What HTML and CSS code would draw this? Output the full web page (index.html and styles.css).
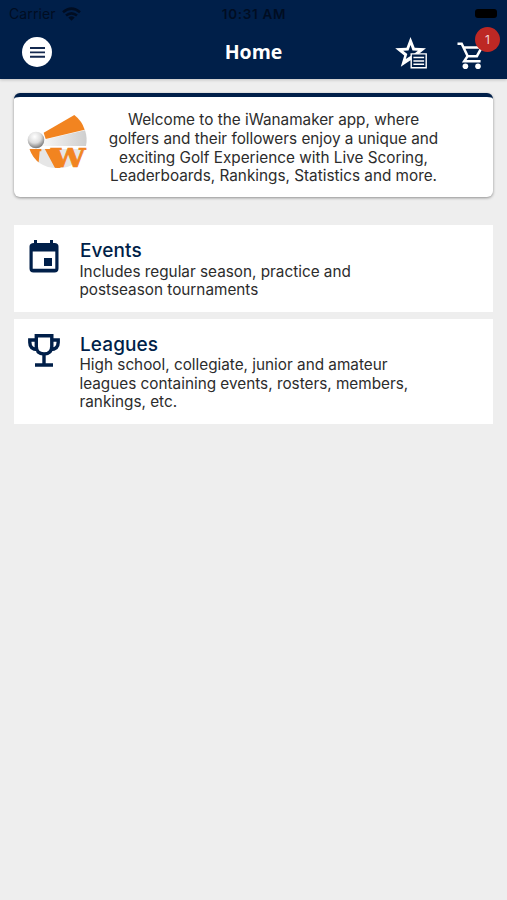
FILE: index.html
```html
<!DOCTYPE html>
<html lang="en">
<head>
<meta charset="utf-8">
<title>Home</title>
<link rel="stylesheet" href="styles.css">
</head>
<body>
<header class="header">
  <div class="status">
    <div class="carrier"><span>Carrier</span>
      <svg width="19" height="14" viewBox="0 0 19 14" fill="none" stroke="currentColor" stroke-width="2.6"><path d="M1 5.2Q9.5-2 18 5.2M4 8.6Q9.5 4 15 8.6"/><path d="M6.3 10.6Q9.5 8 12.7 10.6L9.5 13.8Z" fill="currentColor" stroke="none"/></svg>
    </div>
    <div class="time">10:31 AM</div>
    <div class="battery"></div>
  </div>
  <div class="toolbar">
    <button class="menu" aria-label="Menu"><svg width="15" height="11" viewBox="0 0 15 11" stroke="#14294f" stroke-width="1.9"><path d="M0 1h15M0 5.4h15M0 9.8h15"/></svg></button>
    <h1 class="title">Home</h1>
    <div class="actions">
      <svg class="favorites" width="33" height="33" viewBox="0 0 33 33" fill="none">
        <path fill="#fff" fill-rule="evenodd" d="M15.500 0l4.200 10.700 11.300.5-8.800 7 3.200 11.500-9.900-6.400-9.700 6.500 3.400-11.400L.2 11.200l11.300-.5ZM15.500 8l-2 5.600-5.300.2 4.100 3.300-1.500 5 4.700-3.200 4.800 3.200-1.500-5 4.100-3.300-5.400-.2Z"/>
        <path fill="#001f49" stroke="#fff" stroke-width="1.4" d="M16.200 16.900h15v13.800h-15z"/>
        <path stroke="#fff" stroke-width="1.500" d="M18.400 20.500h10.700M18.400 23.900h10.700M18.400 27.300h10.700"/>
      </svg>
      <div class="cart">
        <svg width="27" height="28" viewBox="0 0 27 28" fill="none" stroke="#fff" stroke-width="2.500"><path d="M.5 1.800h4.200l6 12.400h9.200l4.800-8.800H6.500M10.700 14l-3.500 5.200h16.400"/><g fill="#fff" stroke="none"><circle cx="8.400" cy="24.200" r="2.800"/><circle cx="21" cy="24.200" r="2.800"/></g></svg>
        <span class="badge">1</span>
      </div>
    </div>
  </div>
</header>
<main class="content">
  <section class="welcome">
    <svg class="logo" width="61" height="57" viewBox="51 84 183 171">
      <defs>
        <radialGradient id="ball" cx=".42" cy=".3" r=".7"><stop offset="0" stop-color="#fff"/><stop offset=".55" stop-color="#ddd"/><stop offset="1" stop-color="#777"/></radialGradient>
        <linearGradient id="beam"><stop offset="0" stop-color="#fafafa"/><stop offset="1" stop-color="#cecece"/></linearGradient>
        <clipPath id="bowl"><path d="M58 191H226Q207 249 143 249Q79 249 58 191Z"/></clipPath>
      </defs>
      <path fill="url(#beam)" d="M108 163L225 136Q233 159 228 183H91Z"/>
      <path fill="#f28420" d="M101 143L193 90Q216 108 224 134L107 162Z"/>
      <g clip-path="url(#bowl)">
        <path fill="#e6e6e6" d="M50 190h180v65H50z"/>
        <path fill="#f28420" d="M50 191h44v8h-5l-3 33L82 240H50zM104 191h26l22 58h-17z"/>
      </g>
      <text class="mark" x="123" y="247" textLength="104" lengthAdjust="spacingAndGlyphs">W</text>
      <circle cx="78" cy="165" r="25" fill="url(#ball)"/>
    </svg>
    <p class="intro">Welcome to the iWanamaker app, where<br>golfers and their followers enjoy a unique and<br>exciting Golf Experience with Live Scoring,<br>Leaderboards, Rankings, Statistics and more.</p>
  </section>
  <nav class="list">
    <article class="item">
      <svg class="icon" width="32" height="33" viewBox="0 0 32 33"><path fill="#001f49" fill-rule="evenodd" d="M6 0h3v3h13V0h3v3h1.500Q30.500 3 30.500 6.500v22q0 4-4 4h-21q-4 0-4-4v-22Q1.500 3 6 3ZM4.700 11.500v17.300h22.600V11.500ZM16 18h8v8h-8z"/></svg>
      <div><h2>Events</h2><p>Includes regular season, practice and<br>postseason tournaments</p></div>
    </article>
    <article class="item">
      <svg class="icon trophy" width="32" height="33" viewBox="0 0 32 33" fill="none" stroke="#001f49" stroke-width="3.400"><path d="M8.300 1.800h15.500v10.500Q23.800 20 16 20t-7.700-7.700ZM8.300 6H1.800v2.500q0 7 8 7M23.800 6h6.400v2.500q0 7-8 7M16 20v10.500M7 31h18"/></svg>
      <div><h2>Leagues</h2><p>High school, collegiate, junior and amateur<br>leagues containing events, rosters, members,<br>rankings, etc.</p></div>
    </article>
  </nav>
</main>
</body>
</html>
```

FILE: styles.css
```css
* { box-sizing: border-box; }
body { margin: 0; min-height: 900px; background: #eee; color: #2c2c2c; font-family: Inter, sans-serif; }
h1, h2, p { margin: 0; }
.header { height: 79px; background: #001f49; box-shadow: 0 1px 3px #0003; }
.status { height: 27px; padding: 0 10px 0 9px; display: grid; grid-template-columns: 1fr auto 1fr; align-items: center; color: #000d22; font-size: 14px; }
.carrier { display: flex; align-items: center; gap: 6px; letter-spacing: .1px; }
.time { font-weight: 600; font-size: 13.5px; letter-spacing: .7px; margin-right: -2px; }
.battery { justify-self: end; width: 22px; height: 9px; border-radius: 3px; background: #000; }
.toolbar { height: 50px; padding: 0 23px 0 22px; display: grid; grid-template-columns: 1fr auto 1fr; align-items: center; }
.menu { display: grid; place-items: center; width: 30px; height: 30px; padding: 0; border: 0; border-radius: 50%; background: #fff; }
.title { margin-left: 1px; color: #fff; font: 700 19.500px/26px "Open Sans", sans-serif; }
.actions { justify-self: end; display: flex; align-items: flex-start; gap: 29px; padding-top: 2px; }
.cart { position: relative; height: 28px; margin-top: 5px; }
.cart svg { display: block; }
.badge { position: absolute; left: 18px; top: -15px; width: 25px; height: 25px; border-radius: 50%; background: #bd2824; color: #f3d6d4; font-size: 12px; line-height: 25px; text-align: center; }
.content { padding: 14px 14px 0; }
.welcome { height: 104px; display: flex; padding: 14px 0 0 13px; border-top: 4px solid #001f49; border-radius: 6px; background: #fff; box-shadow: 0 1px 3px #0006; }
.logo { flex: none; margin-top: 2px; overflow: visible; }
.mark { font: bold 76px "DejaVu Serif", serif; fill: #f28420; stroke: #f28420; stroke-width: 2px; }
.intro { width: 371px; margin-top: .4px; font-size: 15.300px; line-height: 18.600px; text-align: center; white-space: nowrap; }
.list { display: grid; gap: 7px; margin-top: 28px; }
.item { display: flex; gap: 20px; padding: 15px 13px 12px 14px; background: #fff; }
.icon { flex: none; }
.item h2 { color: #001f49; font-size: 19px; font-weight: 500; line-height: 21px; margin-bottom: 1.600px; letter-spacing: .1px; }
.item p { margin-left: -.5px; font-size: 15.300px; line-height: 18.500px; white-space: nowrap; }
```
